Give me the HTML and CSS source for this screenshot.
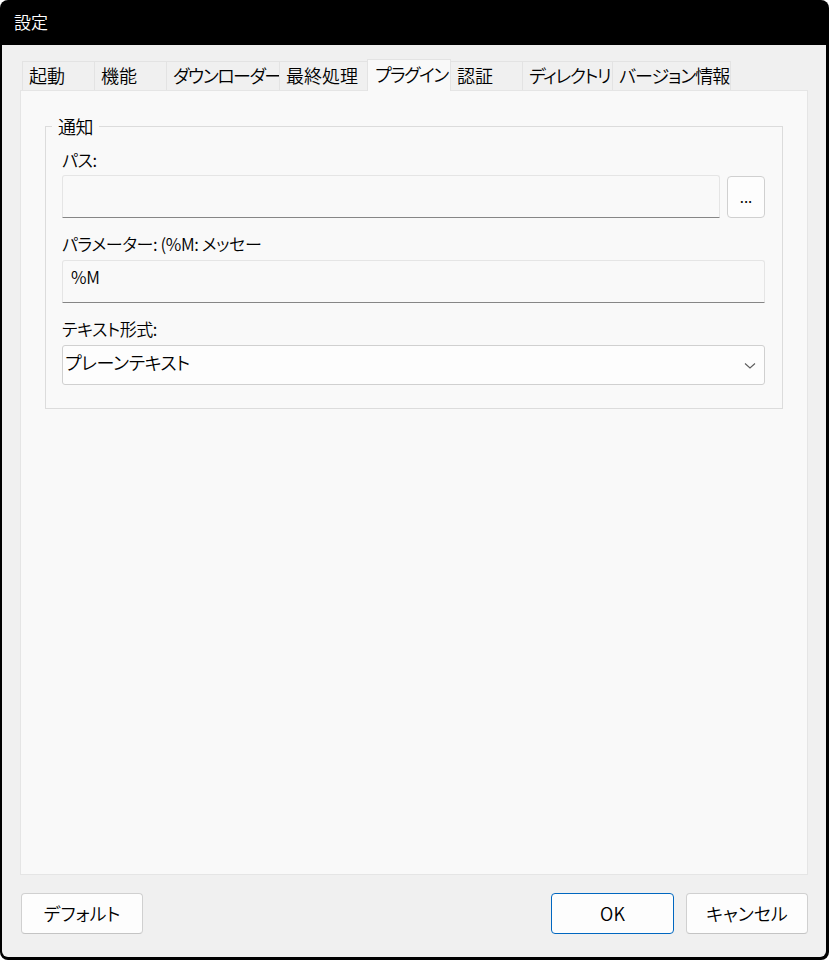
FILE: index.html
```html
<!DOCTYPE html>
<html lang="ja">
<head>
<meta charset="utf-8">
<title>設定</title>
<link rel="stylesheet" href="styles.css">
</head>
<body>
<div class="window">
  <div class="titlebar">設定</div>
  <div class="client">
    <div class="tabs">
      <div class="tab w-start">起動</div>
      <div class="tab w-func">機能</div>
      <div class="tab w-dl">ダウンローダー</div>
      <div class="tab w-post">最終処理</div>
      <div class="tab w-plugin selected">プラグイン</div>
      <div class="tab w-auth">認証</div>
      <div class="tab w-dir">ディレクトリ</div>
      <div class="tab w-ver last">バージョン情報</div>
    </div>
    <div class="panel">
      <fieldset class="group">
        <legend>通知</legend>
        <div class="label">パス:</div>
        <div class="row">
          <div class="textbox"></div>
          <button class="browse">...</button>
        </div>
        <div class="label">パラメーター: (%M: メッセー</div>
        <div class="textbox param">%M</div>
        <div class="label">テキスト形式:</div>
        <div class="combo">
          <span class="combo-text">プレーンテキスト</span>
          <svg class="chevron" width="12" height="8" viewBox="0 0 12 8"><path d="M1 1.5 L6 6 L11 1.5" fill="none" stroke="#5c5c5c" stroke-width="1.1"/></svg>
        </div>
      </fieldset>
    </div>
    <div class="footer">
      <button class="btn">デフォルト</button>
      <div class="spacer"></div>
      <button class="btn ok">OK</button>
      <button class="btn">キャンセル</button>
    </div>
  </div>
</div>
</body>
</html>
```

FILE: styles.css
```css
* { box-sizing: border-box; }
html, body { margin: 0; padding: 0; background: #ffffff; }
body {
  font-family: "Noto Sans CJK JP", "Noto Sans", sans-serif;
  font-feature-settings: "palt";
  font-weight: 350;
  color: #000;
}
.window {
  width: 829px;
  height: 960px;
  background: #000;
  border-radius: 8px;
  display: flex;
  flex-direction: column;
  overflow: hidden;
}
.titlebar {
  height: 45px;
  color: #fff;
  font-size: 17px;
  line-height: 44px;
  padding-left: 14px;
  flex: none;
}
.client {
  flex: 1;
  margin: 0 3px 3px 2px;
  background: #f0f0f0;
  border-radius: 0 0 6px 6px;
  padding: 14px 18px 0 18px;
  display: flex;
  flex-direction: column;
}
.tabs {
  display: flex;
  align-items: flex-end;
  margin-left: 2px;
  height: 31px;
  font-size: 18px;
  letter-spacing: -1.5px;
}
.tab {
  height: 29px;
  line-height: 26px;
  padding-left: 6px;
  white-space: nowrap;
  border-top: 1px solid #e3e3e3;
  border-left: 1px solid #e3e3e3;
  background: #f0f0f0;
}
.tab.last { border-right: 1px solid #e3e3e3; }
.tab.selected {
  height: 32px;
  line-height: 28px;
  margin-bottom: -1px;
  padding-left: 7px;
  background: #f9f9f9;
  border: 1px solid #e3e3e3;
  border-bottom: none;
  position: relative;
  z-index: 1;
}
.tab.selected + .tab { border-left: none; }
.w-start { width: 72px; letter-spacing: 0; }
.w-func { width: 72px; letter-spacing: 0; }
.w-dl { width: 113px; }
.w-post { width: 88px; letter-spacing: 0; }
.w-plugin { width: 84px; }
.w-auth { width: 71px; letter-spacing: 0; }
.w-dir { width: 90px; }
.w-ver { width: 119px; letter-spacing: -1px; }
.panel {
  height: 785px;
  background: #f9f9f9;
  border: 1px solid #e5e5e5;
  padding: 23px 24px;
  flex: none;
}
.group {
  margin: 0;
  border: 1px solid #dcdcdc;
  padding: 10px 17px 23px 16px;
  font-size: 17px;
  letter-spacing: -0.4px;
}
.group legend {
  font-size: 18px;
  line-height: 24px;
  padding: 0 6px;
  margin-left: -10px;
}
.label {
  line-height: 24px;
  height: 24px;
  margin-top: 14px;
  margin-bottom: 4px;
}
.group legend + .label { margin-top: 0; margin-bottom: 3px; }
.row {
  display: flex;
  gap: 7px;
  align-items: flex-start;
}
.textbox {
  height: 43px;
  background: #f9f9f9;
  border: 1px solid #e5e5e5;
  border-bottom: 1px solid #868686;
  border-radius: 3px 3px 0 0;
  flex: 1;
}
.textbox.param {
  padding: 4px 8px;
  line-height: 24px;
  font-size: 17px;
}
.browse {
  width: 38px;
  height: 42px;
  margin-top: 1px;
  background: #fdfdfd;
  border: 1px solid #d0d0d0;
  border-radius: 4px;
  font-family: inherit;
  font-size: 15px;
  padding: 0 0 2px 0;
  color: #000;
}
.combo {
  height: 40px;
  background: #fdfdfd;
  border: 1px solid #d0d0d0;
  border-radius: 3px;
  display: flex;
  align-items: center;
  padding: 0 8px 0 2px;
  font-size: 18px;
}
.combo-text { flex: 1; line-height: 24px; margin-top: -7px; }
.chevron { margin-top: 2px; }
.footer {
  display: flex;
  margin: 18px 0 0 1px;
  gap: 12px;
}
.spacer { flex: 1; }
.btn {
  width: 122px;
  height: 41px;
  background: #fdfdfd;
  border: 1px solid #d0d0d0;
  border-bottom-color: #c4c4c4;
  border-radius: 4px;
  font-family: inherit;
  font-feature-settings: "palt";
  font-weight: 350;
  font-size: 18px;
  color: #000;
  padding: 0 0 2px 0;
}
.btn.ok {
  width: 123px;
  border: 1px solid #0067c0;
}
```
